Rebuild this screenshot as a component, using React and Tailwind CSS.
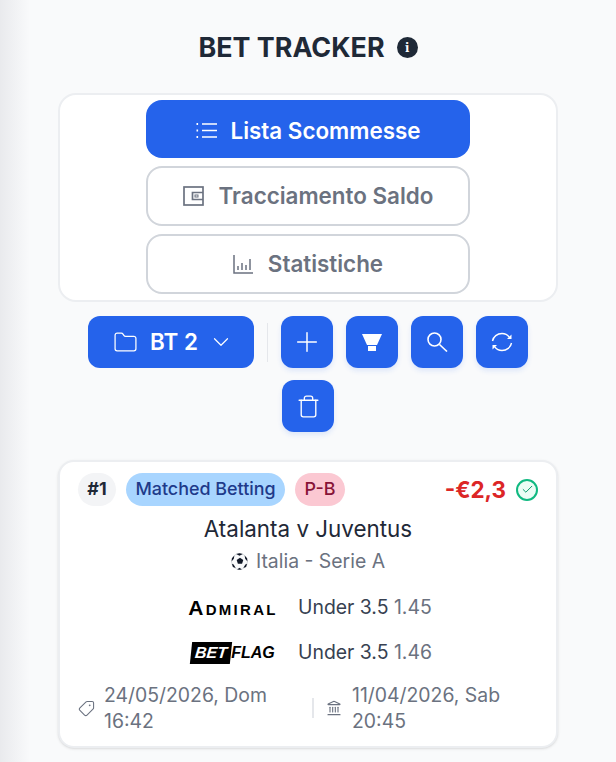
import React from "react";
import { Plus, ChevronDown, Folder, Trash, Tag, Landmark, Check } from "lucide-react";

const font = { fontFamily: "Inter, sans-serif" };

function ListIcon() {
  return (
    <svg width="21" height="17" viewBox="0 0 21 17" fill="none" stroke="currentColor" strokeWidth="1.4">
      <path d="M6 2h15M6 8.5h15M6 15h15" />
      <path d="M0.5 2h1.6M0.5 8.5h1.6M0.5 15h1.6" strokeWidth="2" />
    </svg>
  );
}

function WalletIcon() {
  return (
    <svg width="21" height="20" viewBox="0 0 21 20" fill="none" stroke="currentColor" strokeWidth="1.7">
      <rect x="1" y="1" width="19" height="18" />
      <path d="M20 6.5H9.5v7H20" />
      <rect x="12" y="9" width="3" height="2" strokeWidth="1" />
    </svg>
  );
}

function ChartIcon() {
  return (
    <svg width="20" height="19" viewBox="0 0 20 19" fill="none" stroke="currentColor" strokeWidth="1.5">
      <path d="M1 0v18h19" />
      <path d="M5 15v-4M9 15V8M13 15v-5M17 15V4" />
    </svg>
  );
}

function FunnelIcon() {
  return (
    <svg width="20" height="17" viewBox="0 0 20 17" fill="white">
      <path d="M0 0h20l-5 11H5z" />
      <rect x="6" y="12" width="8" height="5" />
    </svg>
  );
}

function SearchIcon() {
  return (
    <svg width="21" height="20" viewBox="0 0 21 20" fill="none" stroke="white" strokeWidth="1.6">
      <circle cx="7.5" cy="7.5" r="6.5" />
      <path d="M12.5 12.5l7.5 7" />
    </svg>
  );
}

function RefreshIcon() {
  return (
    <svg width="22" height="20" viewBox="0 0 22 20" fill="none" stroke="white" strokeWidth="1.4">
      <path d="M1.5 9C2.3 4.6 6.2 1.5 11 1.5c3 0 5.6 1.4 7.2 3.6" />
      <path d="M20.5 11c-.8 4.4-4.7 7.5-9.5 7.5-3 0-5.6-1.4-7.2-3.6" />
      <path d="M20.5 2.5v4.5H16z" fill="white" stroke="none" />
      <path d="M1.5 17.500v-4.500H6z" fill="white" stroke="none" />
    </svg>
  );
}

function SoccerBall() {
  return (
    <svg width="17" height="17" viewBox="0 0 18 18">
      <circle cx="9" cy="9" r="8.5" fill="#f9fafb" stroke="#9ca3af" strokeWidth="0.4" />
      <path d="M9.500 5l3.500 2.500-1.300 4H7.300L6 7.500z" fill="#111827" />
      <path d="M5.500 1 9 2.800 12.500 1 9 .3zM.6 9l2.400-3 .6-3.400L1 5.500zM17.400 9l-2.400-3-.6-3.400 2.600 2.900zM5 16l-2.200-3.800L1 11.500l1 3.300zM13 16l2.200-3.800 1.800-.7-1 3.300zM6.500 17.500l2.500-1.800 2.500 1.800-2.500.3z" fill="#111827" />
    </svg>
  );
}

function IconButton({ children }) {
  return (
    <button className="w-[52px] h-[52px] rounded-xl bg-[#2563eb] text-white flex items-center justify-center shadow-[0_3px_5px_rgba(37,99,235,0.12)]">
      {children}
    </button>
  );
}

function NavButton({ active, icon, label }) {
  return (
    <button
      className={
        active
          ? "w-[324px] h-[58px] pt-[3px] rounded-2xl bg-[#2563eb] text-white flex items-center justify-center gap-[14px] text-[22.4px] font-semibold"
          : "w-[324px] h-[60px] rounded-2xl bg-white border-2 border-[#d1d5db] text-[#6b7280] flex items-center justify-center gap-[15px] text-[22.4px] font-semibold"
      }
    >
      {icon}
      {label}
    </button>
  );
}

function BookieRow({ logo, odds }) {
  return (
    <div className="flex items-center h-[45px]">
      <div className="w-[90px] ml-[128px] flex justify-center">{logo}</div>
      <div className="ml-5 text-[19.4px] text-[#374151]">
        Under 3.5 <span className="text-[#6b7280]">{odds}</span>
      </div>
    </div>
  );
}

export default function App() {
  return (
    <div
      style={font}
      className="h-[762px] overflow-hidden bg-[#f9fafb] bg-[linear-gradient(90deg,#e9eaed_0px,#f9fafb_30px)]"
    >
      <div className="w-[500px] mx-auto pt-[29px]">
        <div className="flex items-center justify-center gap-3 h-9">
          <h1 className="text-[26.88px] font-bold text-[#1f2937]">BET TRACKER</h1>
          <div className="w-[21px] h-[21px] rounded-full bg-[#1f2937] text-white flex items-center justify-center text-[14px] font-bold font-serif">
            i
          </div>
        </div>

        <div className="mt-[28px] h-[209px] bg-white border-2 border-[#eceef1] rounded-[18px] flex flex-col items-center gap-2 pt-[5px]">
          <NavButton active icon={<ListIcon />} label="Lista Scommesse" />
          <NavButton icon={<WalletIcon />} label="Tracciamento Saldo" />
          <NavButton icon={<ChartIcon />} label="Statistiche" />
        </div>

        <div className="mt-[14px] flex flex-wrap justify-center items-center gap-x-[13px] gap-y-3">
          <button className="w-[166px] h-[52px] rounded-xl bg-[#2563eb] text-white flex items-center justify-center text-[22.4px] font-semibold">
            <Folder size={25} strokeWidth={1.2} />
            <span className="ml-[12px]">BT 2</span>
            <ChevronDown size={26} strokeWidth={1.1} className="ml-[10px] -mr-[5px]" />
          </button>
          <div className="w-px h-[39px] bg-[#e5e7eb]" />
          <IconButton><Plus size={32} strokeWidth={1.1} /></IconButton>
          <IconButton><FunnelIcon /></IconButton>
          <IconButton><SearchIcon /></IconButton>
          <IconButton><RefreshIcon /></IconButton>
          <IconButton><Trash size={25} strokeWidth={1.3} /></IconButton>
        </div>

        <div className="mt-7 h-[288px] bg-white border-2 border-[#eceef1] rounded-2xl shadow-sm px-[18px] pt-[11px]">
          <div className="flex items-center gap-[10px]">
            <span className="w-[38px] h-[33px] rounded-full bg-[#f3f4f6] text-[#1f2937] flex items-center justify-center text-[17.92px] font-bold">#1</span>
            <span className="w-[159px] h-[33px] rounded-full bg-[#a8d5ff] text-[#1e3a8a] flex items-center justify-center text-[17.92px] font-medium">Matched Betting</span>
            <span className="w-[50px] h-[33px] rounded-full bg-[#fbc8d2] text-[#881337] flex items-center justify-center text-[17.92px] font-medium">P-B</span>
            <span className="ml-auto text-[22.4px] font-bold text-[#dc2626]">-€2,3</span>
            <span className="w-[22px] h-[22px] rounded-full border-2 border-[#10b981] bg-[#ecfdf5] flex items-center justify-center text-[#059669]">
              <Check size={13} strokeWidth={1.8} />
            </span>
          </div>
          <div className="mt-[5px] text-center text-[22.4px] text-[#1f2937]">Atalanta v Juventus</div>
          <div className="mt-[2px] flex items-center justify-center gap-2 text-[19.4px] text-[#6b7280]">
            <SoccerBall />
            Italia - Serie A
          </div>
          <div className="mt-[9px] -ml-[18px]">
            <BookieRow
              odds="1.45"
              logo={<span className="text-[21px] leading-none font-bold text-black tracking-[0.11em] font-['Liberation_Sans'] [font-variant:small-caps]">Admiral</span>}
            />
            <BookieRow
              odds="1.46"
              logo={<span className="flex items-center font-black italic text-black font-['Liberation_Sans'] text-[16px] leading-none"><span className="bg-black text-white px-1 py-[3px] -skew-x-6">BET</span>FLAG</span>}
            />
          </div>
          <div className="mt-[7px] flex items-center text-[19.4px] leading-[26px] text-[#6b7280]">
            <Tag size={17} strokeWidth={1.5} className="shrink-0 -scale-x-100" />
            <span className="ml-[9px] w-[190px]">24/05/2026, Dom 16:42</span>
            <div className="w-0.5 h-[20px] bg-[#e5e7eb] ml-[18px]" />
            <Landmark size={16} strokeWidth={1.7} className="shrink-0 ml-3" />
            <span className="ml-[10px] w-[170px]">11/04/2026, Sab 20:45</span>
          </div>
        </div>
      </div>
    </div>
  );
}
